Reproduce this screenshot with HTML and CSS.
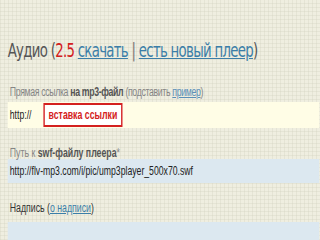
FILE: index.html
```html
<!DOCTYPE html>
<html lang="ru">
<head>
<meta charset="UTF-8">
<title>Аудио</title>
<link rel="stylesheet" href="styles.css">
</head>
<body>

<div class="page">
    <h1 class="title">Аудио (<span class="ver">2.5</span> <a href="#">скачать</a> <span class="sep">|</span> <a href="#">есть новый плеер</a>)</h1>

    <div class="label first">Прямая ссылка <b>на mp3-файл</b> (подставить <a href="#">пример</a>)</div>
    <div class="field yellow">
        <span class="val">http://</span>
        <span class="paste">вставка ссылки</span>
    </div>

    <div class="label second">Путь к <b>swf-файлу плеера</b>*</div>
    <div class="field blue">
        <span class="val">http://flv-mp3.com/i/pic/ump3player_500x70.swf</span>
    </div>

    <div class="label dark">Надпись (<a href="#">о надписи</a>)</div>
    <div class="field blue last"></div>
</div>

</body>
</html>
```

FILE: styles.css
```css
html, body {
    overflow: hidden;
}
body {
    margin: 0;
    font-family: "Liberation Sans", Arial, sans-serif;
    background-color: #efeee0;
    background-image:
        repeating-linear-gradient(0deg, rgba(200, 200, 180, 0.25) 0 1px, transparent 1px 4px),
        repeating-linear-gradient(90deg, rgba(200, 200, 180, 0.25) 0 1px, transparent 1px 4px);
    color: #555;
    height: 240px;
}
/* the screenshot is squeezed sideways, so the whole page is too */
.page {
    width: 456px;
    padding-left: 11px;
    box-sizing: border-box;
    transform: scale(0.7, 1);
    transform-origin: 0 0;
}
.title {
    margin: 38px 0 0 0;
    font-family: "DejaVu Sans", sans-serif;
    font-size: 19px;
    font-weight: normal;
    letter-spacing: -1px;
    color: #555;
    line-height: 24px;
    white-space: nowrap;
}
.title .ver {
    color: #d42020;
}
.title a {
    color: #3b7ea8;
}
.title .sep {
    color: #777;
}
.label {
    margin: 24px 0 0 3px;
    font-size: 12.5px;
    line-height: 12px;
    color: #858585;
    white-space: nowrap;
}
.label.first {
    letter-spacing: -0.5px;
}
.label.second {
    margin-top: 19px;
}
.label b {
    color: #555;
}
.label a {
    color: #5a8fb8;
}
.label.dark {
    margin-top: 19px;
    color: #333;
}
.label.dark a {
    color: #3b7ea8;
}
.field {
    display: flex;
    align-items: center;
    gap: 17px;
    padding-left: 3px;
}
.yellow {
    background: #fffde6;
    height: 26px;
    margin-top: 4px;
}
.blue {
    background: #dce8f0;
    height: 24px;
}
.last {
    margin-top: 8px;
    height: 30px;
}
.val {
    font-size: 12.4px;
    color: #222;
}
.paste {
    box-sizing: border-box;
    width: 113px;
    height: 24px;
    border: 2px solid #d42020;
    background: #fff;
    color: #d42020;
    font-weight: bold;
    font-size: 12.5px;
    line-height: 20px;
    text-align: center;
}
```
